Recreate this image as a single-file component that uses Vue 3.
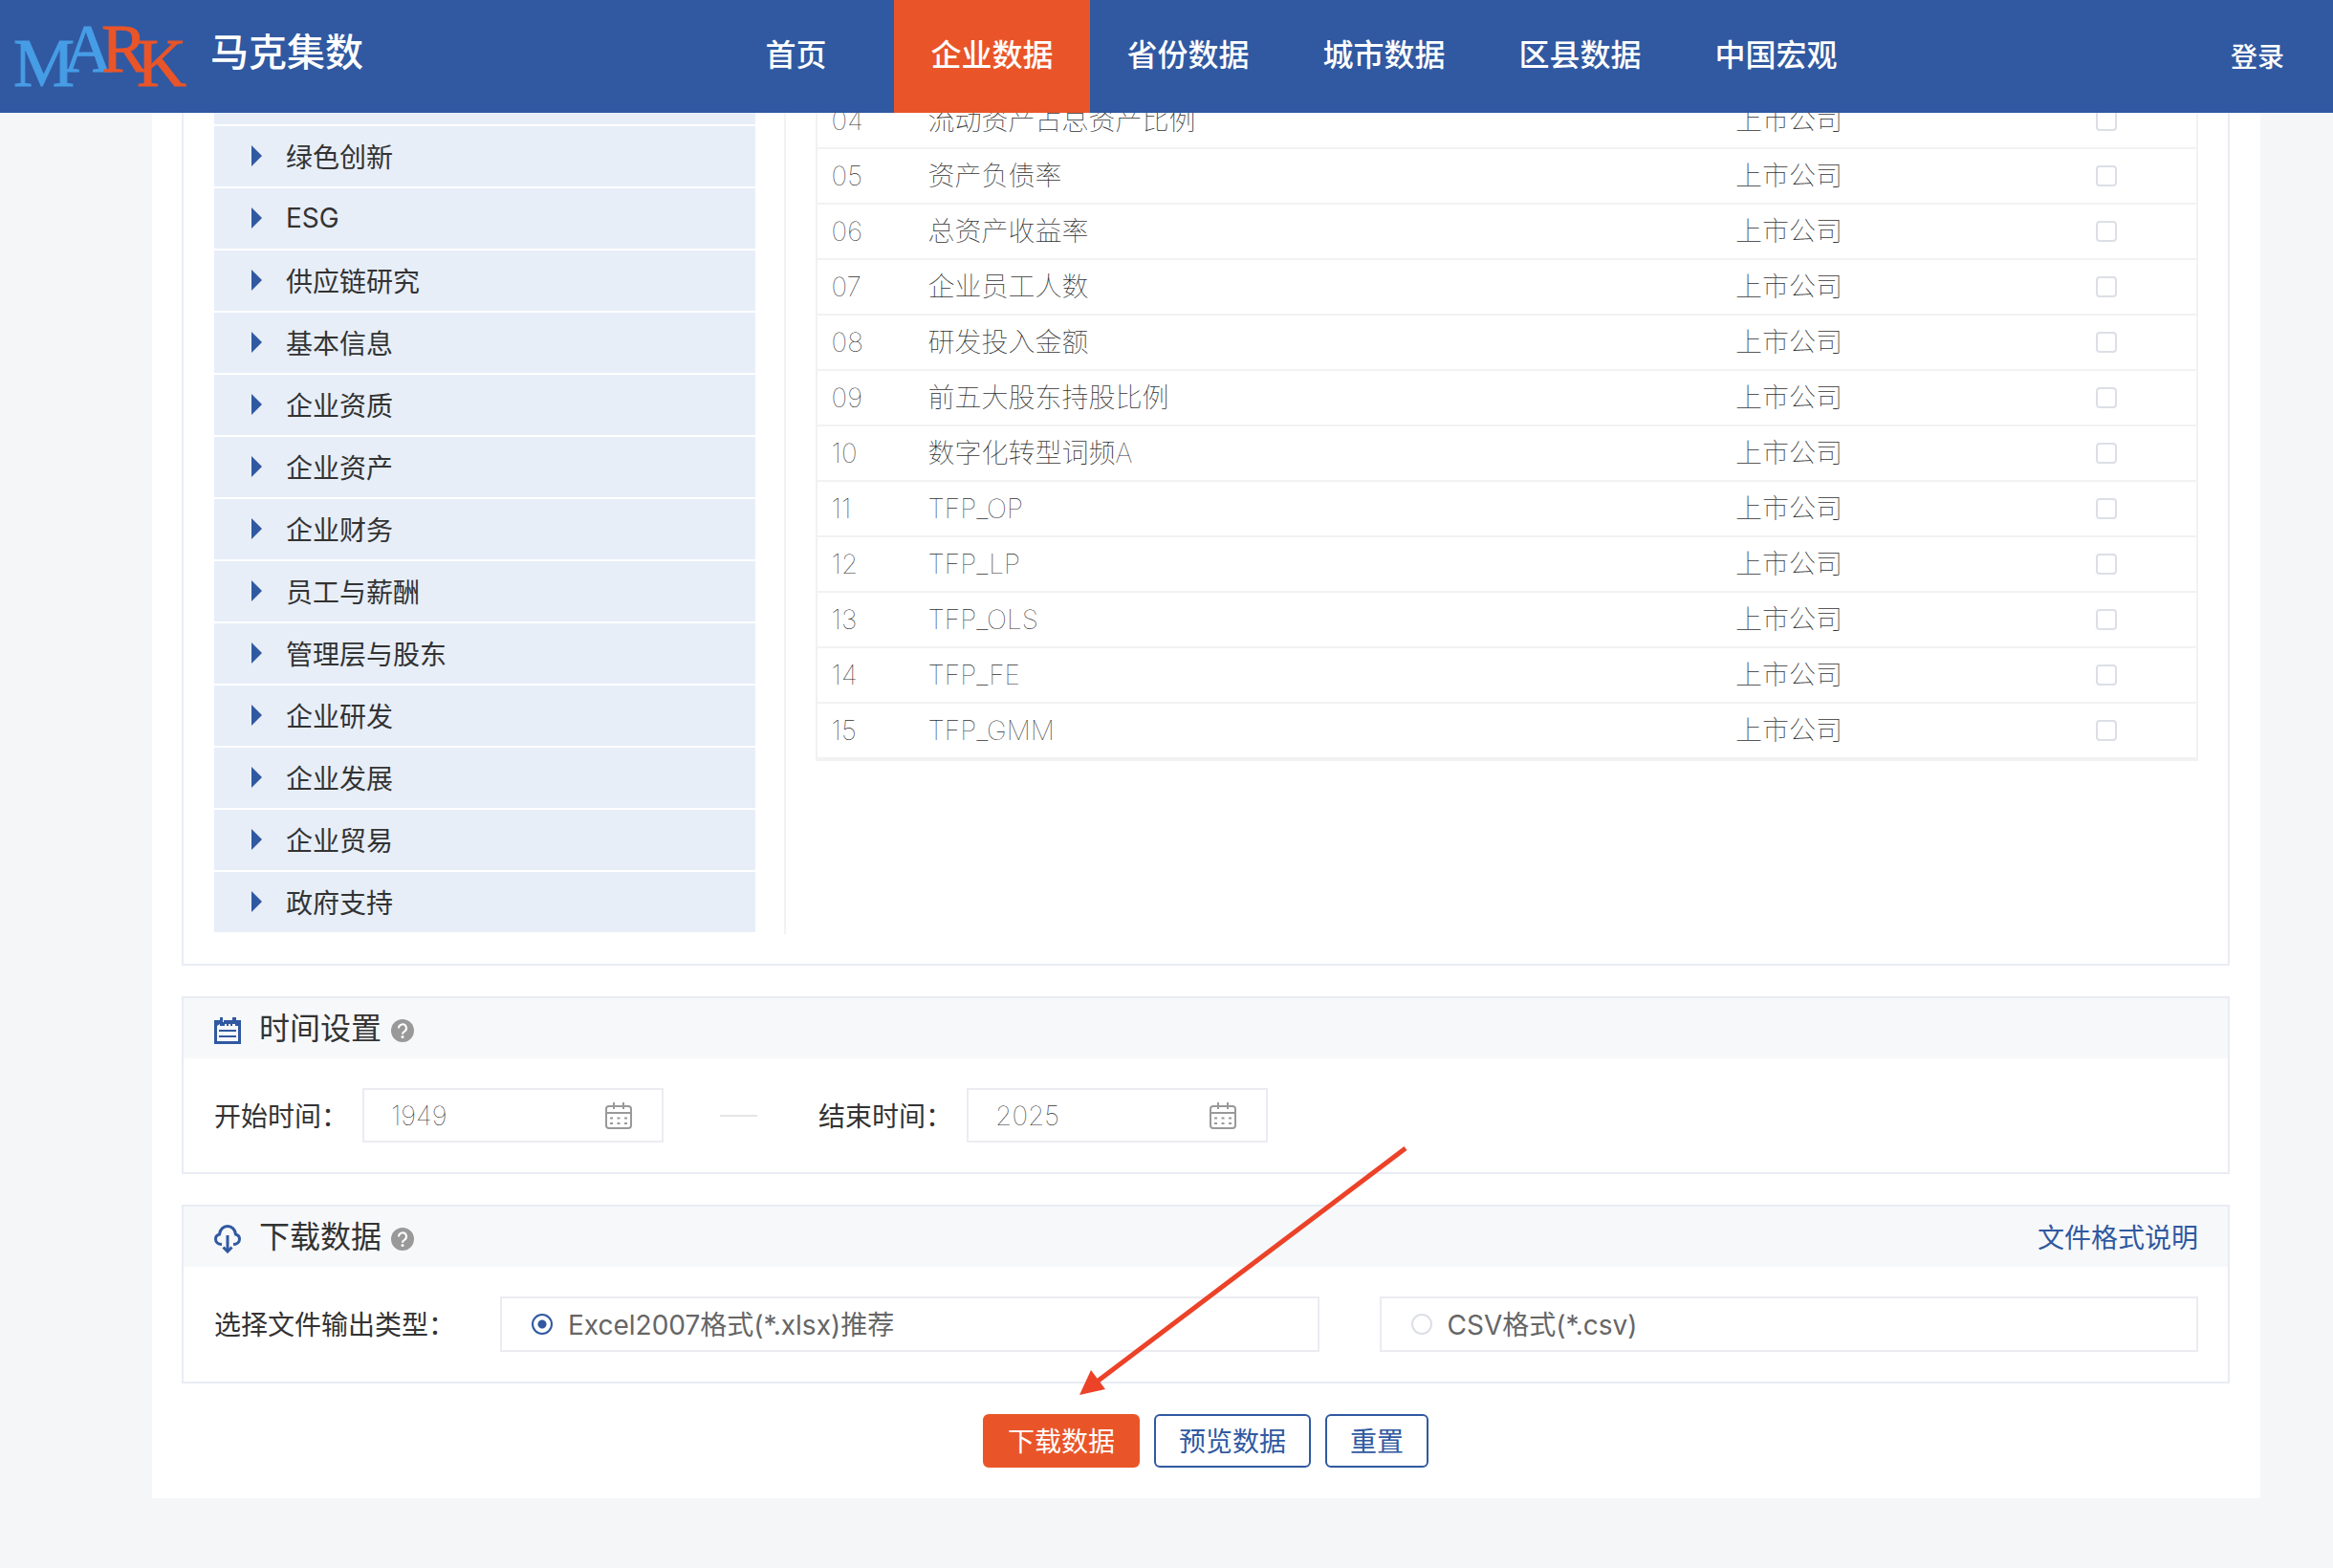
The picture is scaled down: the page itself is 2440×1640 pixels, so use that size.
<script setup>
import { ref } from 'vue'

const navItems = ['首页', '企业数据', '省份数据', '城市数据', '区县数据', '中国宏观']
const activeNav = ref('企业数据')

// the first entry is scrolled under the header
const categories = [
  '',
  '绿色创新',
  'ESG',
  '供应链研究',
  '基本信息',
  '企业资质',
  '企业资产',
  '企业财务',
  '员工与薪酬',
  '管理层与股东',
  '企业研发',
  '企业发展',
  '企业贸易',
  '政府支持'
]

const names = [
  '流动资产占总资产比例',
  '资产负债率',
  '总资产收益率',
  '企业员工人数',
  '研发投入金额',
  '前五大股东持股比例',
  '数字化转型词频A',
  'TFP_OP',
  'TFP_LP',
  'TFP_OLS',
  'TFP_FE',
  'TFP_GMM'
]

const indicators = ref(
  names.map((name, i) => ({
    no: String(i + 4).padStart(2, '0'),
    name,
    source: '上市公司',
    checked: false
  }))
)

const startYear = ref('1949')
const endYear = ref('2025')
const fileType = ref('xlsx')

const handleReset = () => {
  startYear.value = '1949'
  endYear.value = '2025'
  fileType.value = 'xlsx'
  indicators.value.forEach((row) => {
    row.checked = false
  })
}
</script>

<template>
  <div class="page">
    <header class="header">
      <a href="#" class="brand">
        <svg class="logo" viewBox="0 0 208 100" width="208" height="100">
          <g font-family="Liberation Serif, serif" font-size="72" stroke-width="1">
            <text x="14" y="81" fill="#479de5" stroke="#479de5">M</text>
            <text x="66" y="66" fill="#479de5" stroke="#479de5">A</text>
            <text x="106" y="66" fill="#e95529" stroke="#e95529">R</text>
            <text x="143" y="81" fill="#e95529" stroke="#e95529">K</text>
          </g>
        </svg>
        <span class="brand-name">马克集数</span>
      </a>
      <nav class="nav">
        <a
          v-for="item in navItems"
          :key="item"
          href="#"
          class="nav-item"
          :class="{ active: item === activeNav }"
          @click.prevent="activeNav = item"
        >{{ item }}</a>
      </nav>
      <a href="#" class="login">登录</a>
    </header>

    <main class="main">
      <section class="panel panel-select">
        <ul class="categories">
          <li v-for="(item, i) in categories" :key="i">
            <button type="button" class="category">{{ item }}</button>
          </li>
        </ul>
        <div class="indicators">
          <table class="table">
            <colgroup>
              <col class="col-no" />
              <col class="col-name" />
              <col class="col-source" />
              <col class="col-check" />
            </colgroup>
            <tbody>
              <tr v-for="row in indicators" :key="row.no">
                <td>{{ row.no }}</td>
                <td>{{ row.name }}</td>
                <td class="center">{{ row.source }}</td>
                <td class="center">
                  <input v-model="row.checked" type="checkbox" class="checkbox" :aria-label="row.name" />
                </td>
              </tr>
            </tbody>
          </table>
        </div>
      </section>

      <!-- 时间设置 -->
      <section class="panel">
        <div class="panel-head">
          <svg class="head-icon" viewBox="0 0 28 28" width="28" height="28">
            <path fill="#3059a1" fill-rule="evenodd" d="M0 3h6V0h3v5h1V3h9V0h4v3h5v25H0zM3 9v16h22V9h-3V7h-3v2h-2V7h-2v2h-2V7h-2v2H6V7z" />
            <path stroke="#3059a1" stroke-width="2" d="M5 14h18M5 20h18" />
          </svg>
          <h2>时间设置</h2>
          <svg class="help" viewBox="0 0 24 24" width="24" height="24">
            <circle cx="12" cy="12" r="12" fill="#999" />
            <path fill="none" stroke="#fff" stroke-width="2" d="M8 9.500a4 4 0 1 1 6 3.300q-2 1-2 3" />
            <circle cx="12" cy="18.500" r="1.500" fill="#fff" />
          </svg>
        </div>
        <div class="panel-body">
          <label class="label" for="start-year">开始时间：</label>
          <div class="date-box">
            <input id="start-year" v-model="startYear" type="text" class="date-input" />
            <svg class="calendar" viewBox="0 0 28 28" width="28" height="28">
              <rect x="1" y="4" width="26" height="23" rx="3" />
              <path d="M1 11h26M9 0v7M19 0v7M5 16.500h3M12.500 16.500h3M20 16.500h3M5 22h3M12.500 22h3M20 22h3" />
            </svg>
          </div>
          <span class="dash"></span>
          <label class="label" for="end-year">结束时间：</label>
          <div class="date-box">
            <input id="end-year" v-model="endYear" type="text" class="date-input" />
            <svg class="calendar" viewBox="0 0 28 28" width="28" height="28">
              <rect x="1" y="4" width="26" height="23" rx="3" />
              <path d="M1 11h26M9 0v7M19 0v7M5 16.500h3M12.500 16.500h3M20 16.500h3M5 22h3M12.500 22h3M20 22h3" />
            </svg>
          </div>
        </div>
      </section>

      <!-- 下载数据 -->
      <section class="panel">
        <div class="panel-head">
          <svg class="head-icon" viewBox="0 0 28 30" width="28" height="30">
            <path fill="none" stroke="#3059a1" stroke-width="3" d="M8 20.500C4 20.500 1.500 18 1.500 15c0-3 2-4.500 4-5C6 5 9.500 1.500 14 1.500S22 5 22.500 10c2 .5 4 2 4 5 0 3-2.500 5.500-6.500 5.500" />
            <path fill="none" stroke="#3059a1" stroke-width="3" d="M14 11v16" />
            <path fill="none" stroke="#3059a1" stroke-width="3" d="M9.500 23.500l4.500 4.500 4.500-4.500" />
          </svg>
          <h2>下载数据</h2>
          <svg class="help" viewBox="0 0 24 24" width="24" height="24">
            <circle cx="12" cy="12" r="12" fill="#999" />
            <path fill="none" stroke="#fff" stroke-width="2" d="M8 9.500a4 4 0 1 1 6 3.300q-2 1-2 3" />
            <circle cx="12" cy="18.500" r="1.500" fill="#fff" />
          </svg>
          <a href="#" class="format-link">文件格式说明</a>
        </div>
        <div class="panel-body">
          <span id="file-type-label" class="label">选择文件输出类型：</span>
          <div class="radio-group" role="radiogroup" aria-labelledby="file-type-label">
            <label class="radio-box">
              <input v-model="fileType" type="radio" name="file-type" value="xlsx" class="radio" />
              <span class="radio-text">Excel2007格式(*.xlsx)推荐</span>
            </label>
            <label class="radio-box">
              <input v-model="fileType" type="radio" name="file-type" value="csv" class="radio" />
              <span class="radio-text">CSV格式(*.csv)</span>
            </label>
          </div>
        </div>
      </section>

      <div class="actions">
        <button type="button" class="btn btn-primary">下载数据</button>
        <button type="button" class="btn">预览数据</button>
        <button type="button" class="btn" @click="handleReset">重置</button>
        <svg class="arrow" viewBox="0 0 346 262" width="346" height="262">
          <path stroke="#ec4228" stroke-width="5" d="M342 3L18 248" />
          <path fill="#ec4228" d="M1 261l12-26 15 20z" />
        </svg>
      </div>
    </main>
  </div>
</template>

<style>
body {
  background: #f4f6f8;
}
</style>

<style scoped>
.page {
  font-family: Inter, "Noto Sans CJK SC", sans-serif;
  font-size: 28px;
  color: #333;
}

a {
  text-decoration: none;
}

.header {
  position: fixed;
  top: 0;
  left: 0;
  right: 0;
  z-index: 10;
  height: 118px;
  display: flex;
  align-items: center;
  justify-content: space-between;
  background: #3059a1;
}

.brand {
  flex: 0 0 730px;
  display: flex;
  align-items: center;
  gap: 12px;
}

.brand-name {
  font-size: 40px;
  line-height: 40px;
  font-weight: 500;
  color: #fff;
  padding-bottom: 8px;
}

.nav {
  flex: 1;
  display: flex;
}

.nav-item {
  width: 205px;
  line-height: 116px;
  padding-bottom: 2px;
  text-align: center;
  font-size: 32px;
  font-weight: 500;
  color: #fff;
}

.nav-item.active {
  background: #e95529;
}

.login {
  padding: 0 51px 2px 0;
  font-weight: 500;
  color: #fff;
}

.main {
  margin: 0 76px 0 159px;
  padding: 0 32px 32px 31px;
  background: #fff;
}

.panel {
  border: 2px solid #e9ecf3;
  margin-bottom: 32px;
}

.panel-select {
  display: flex;
  border-top: none;
  padding: 67px 31px 31px 32px;
}

.categories {
  flex: 0 0 28.8%;
  box-sizing: border-box;
  margin: 0;
  padding: 0 30px 0 0;
  list-style: none;
  border-right: 2px solid #f2f3f5;
}

.category {
  position: relative;
  display: block;
  width: 100%;
  height: 63px;
  margin-bottom: 2px;
  padding: 0 0 2px 75px;
  border: none;
  background: #e7eef8;
  font: inherit;
  color: #333;
  text-align: left;
  cursor: pointer;
}

.category::before {
  content: "";
  position: absolute;
  left: 39px;
  top: 20px;
  border: 11px solid transparent;
  border-left-color: #3059a1;
  border-right: none;
}

.indicators {
  flex: 1;
  padding: 31px 0 0 31px;
}

.table {
  width: 100%;
  table-layout: fixed;
  border-collapse: separate;
  border-spacing: 0;
  border: 2px solid #f2f2f2;
  border-top: none;
  font-weight: 100;
}

.table td {
  height: 56px;
  padding: 0 16px 0 15px;
  line-height: 40px;
  border-bottom: 2px solid #f2f2f2;
}

.col-no {
  width: 7%;
}

.col-source {
  width: 33%;
}

.col-check {
  width: 13%;
}

.table .center {
  text-align: center;
}

.checkbox,
.radio {
  appearance: none;
  flex: none;
  width: 22px;
  height: 22px;
  margin: 0;
  border: 2px solid #dcdfe6;
  border-radius: 4px;
  background: #fff;
}

.checkbox {
  display: block;
  margin: 0 auto;
}

.checkbox:checked {
  background: #3059a1;
  border-color: #3059a1;
}

.panel-head {
  display: flex;
  align-items: center;
  height: 63px;
  padding: 0 31px 0 32px;
  background: #f7f8fa;
}

.panel-head h2 {
  margin: 0 10px 0 19px;
  font-size: 32px;
  line-height: 48px;
  font-weight: 400;
}

.head-icon,
.help {
  margin-top: 4px;
}

.format-link {
  margin-left: auto;
  padding-bottom: 2px;
  color: #3059a1;
}

.panel-body {
  display: flex;
  align-items: center;
  padding: 31px 31px 31px 32px;
}

.label,
.radio-text {
  flex: none;
  padding-bottom: 2px;
}

.date-box {
  display: flex;
  align-items: center;
  box-sizing: border-box;
  width: 315px;
  height: 57px;
  margin-left: 15px;
  padding: 0 31px 0 28px;
  border: 2px solid #ebecf2;
}

.date-input {
  flex: 1;
  min-width: 0;
  padding: 0;
  border: none;
  outline: none;
  background: transparent;
  font: inherit;
  font-weight: 100;
  color: #333;
}

.calendar {
  flex: none;
  fill: none;
  stroke: #999;
  stroke-width: 2;
}

.dash {
  width: 39px;
  height: 2px;
  margin: 0 64px 0 59px;
  background: #e5e5e5;
}

.radio-group {
  flex: 1;
  display: flex;
  gap: 63px;
  margin-left: 47px;
}

.radio-box {
  flex: 1;
  display: flex;
  align-items: center;
  gap: 16px;
  box-sizing: border-box;
  height: 58px;
  padding: 0 31px;
  border: 2px solid #ebecf2;
  color: #666;
}

.radio {
  border-radius: 50%;
}

.radio:checked {
  border-color: #3059a1;
  background: radial-gradient(circle, #3059a1 4px, #fff 5px);
}

.actions {
  position: relative;
  display: flex;
  justify-content: center;
  gap: 15px;
}

.btn {
  height: 56px;
  padding: 0 24px 2px;
  border: 2px solid #3059a1;
  border-radius: 6px;
  background: #fff;
  font: inherit;
  color: #3059a1;
  cursor: pointer;
}

.btn-primary {
  border-color: #e95529;
  background: #e95529;
  color: #fff;
}

/* pointer towards the download button */
.arrow {
  position: absolute;
  left: calc(50% - 133px);
  bottom: 75px;
  pointer-events: none;
}
</style>
